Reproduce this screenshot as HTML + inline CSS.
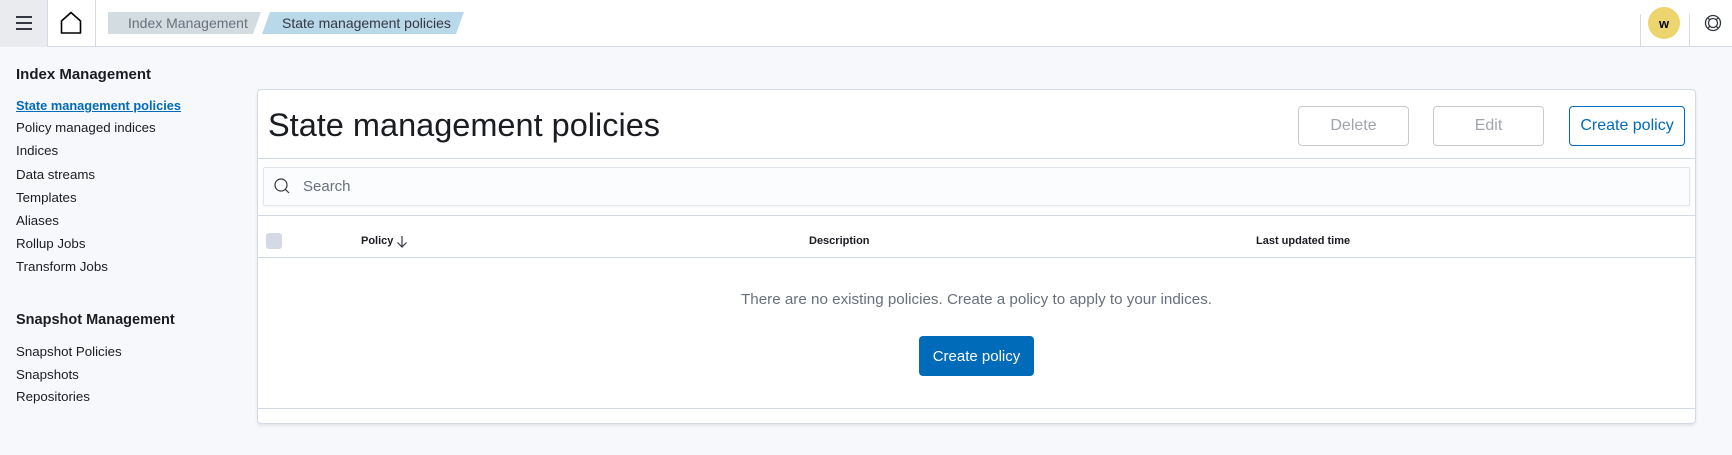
<!DOCTYPE html>
<html><head><meta charset="utf-8"><style>
*{box-sizing:border-box;margin:0;padding:0}
body{width:1732px;height:455px;overflow:hidden;background:#F7F8FC;font-family:"Liberation Sans",sans-serif;color:#1a1c21;position:relative}
.abs{position:absolute}
.hdr{left:0;top:0;width:1732px;height:47px;background:#fff;border-bottom:1px solid #D3DAE6}
.nav a{position:absolute;left:16px;font-size:13.3px;color:#1a1c21;white-space:nowrap;line-height:16px}
.btn{position:absolute;height:40px;border:1px solid #C6CACF;border-radius:4px;font-size:16px;color:#A2A6AC;display:flex;align-items:center;justify-content:center;background:#fff}
</style></head><body>
<div class="abs hdr"></div>
<div class="abs" style="left:0;top:0;width:48px;height:47px;background:#E9EBEF;border-right:1px solid #D3DAE6"></div>
<svg class="abs" style="left:0;top:0" width="48" height="47"><g stroke="#343741" stroke-width="2"><line x1="16" y1="17" x2="32" y2="17"/><line x1="16" y1="23" x2="32" y2="23"/><line x1="16" y1="29" x2="32" y2="29"/></g></svg>
<svg class="abs" style="left:48px;top:0" width="48" height="47"><path d="M13.5 33 V21 L23 12.5 L32.5 21 V33 Z" fill="none" stroke="#000" stroke-width="1.6" stroke-linejoin="round"/></svg>
<div class="abs" style="left:95px;top:0;width:1px;height:47px;background:#D3DAE6"></div>
<svg class="abs" style="left:108px;top:12px" width="360" height="22">
<polygon points="0,0 153,0 145,22 0,22" fill="#D3DCE0"/>
<polygon points="162,0 356,0 348,22 154,22" fill="#B9D8EA"/>
<text x="20" y="16" font-family="Liberation Sans" font-size="14" fill="#69707D">Index Management</text>
<text x="174" y="16" font-family="Liberation Sans" font-size="14" fill="#343741">State management policies</text>
</svg>
<div class="abs" style="left:1640px;top:14px;width:1px;height:33px;background:#D3DAE6"></div>
<div class="abs" style="left:1689px;top:14px;width:1px;height:33px;background:#D3DAE6"></div>
<div class="abs" style="left:1648px;top:7px;width:32px;height:32px;border-radius:50%;background:#ECD56F;font-size:13px;font-weight:bold;display:flex;align-items:center;justify-content:center;color:#000">w</div>
<svg class="abs" style="left:1703px;top:13px" width="20" height="20"><g fill="none" stroke="#343741" stroke-width="1.3"><circle cx="10" cy="10" r="7.5"/><circle cx="10" cy="10" r="4.5"/><line x1="4.7" y1="4.7" x2="6.8" y2="6.8"/><line x1="15.3" y1="4.7" x2="13.2" y2="6.8"/><line x1="4.7" y1="15.3" x2="6.8" y2="13.2"/><line x1="15.3" y1="15.3" x2="13.2" y2="13.2"/></g></svg>

<div class="nav">
<div class="abs" style="left:16px;top:66px;font-size:15px;font-weight:bold;white-space:nowrap">Index Management</div>
<a style="top:98px;color:#006BB8;font-weight:bold;text-decoration:underline;font-size:12.8px">State management policies</a>
<a style="top:120px">Policy managed indices</a>
<a style="top:143px">Indices</a>
<a style="top:167px">Data streams</a>
<a style="top:190px">Templates</a>
<a style="top:213px">Aliases</a>
<a style="top:236px">Rollup Jobs</a>
<a style="top:259px">Transform Jobs</a>
<div class="abs" style="left:16px;top:312px;font-size:14.5px;font-weight:bold;white-space:nowrap">Snapshot Management</div>
<a style="top:344px">Snapshot Policies</a>
<a style="top:367px">Snapshots</a>
<a style="top:389px">Repositories</a>
</div>

<div class="abs" style="left:257px;top:89px;width:1439px;height:335px;background:#fff;border:1px solid #D3DAE6;border-radius:4px;box-shadow:0 2px 3px rgba(0,0,0,.08)"></div>
<div class="abs" style="left:268px;top:107px;font-size:32.5px;font-weight:300;color:#1a1c21;white-space:nowrap">State management policies</div>
<div class="btn" style="left:1298px;top:106px;width:111px">Delete</div>
<div class="btn" style="left:1433px;top:106px;width:111px">Edit</div>
<div class="btn" style="left:1569px;top:106px;width:116px;border-color:#006BB8;color:#006BB8">Create policy</div>
<div class="abs" style="left:258px;top:158px;width:1437px;height:1px;background:#D3DAE6"></div>
<div class="abs" style="left:263px;top:167px;width:1427px;height:39px;background:#FBFCFD;border:1px solid #E0E5EE;border-radius:2px;box-shadow:0 1px 2px rgba(0,0,0,.05)"></div>
<svg class="abs" style="left:273px;top:177px" width="20" height="20"><circle cx="8" cy="8" r="6" fill="none" stroke="#343741" stroke-width="1.2"/><line x1="12.3" y1="12.3" x2="16" y2="16" stroke="#343741" stroke-width="1.2"/></svg>
<div class="abs" style="left:303px;top:178px;font-size:15px;color:#69707D">Search</div>
<div class="abs" style="left:258px;top:215px;width:1437px;height:1px;background:#D3DAE6"></div>
<div class="abs" style="left:266px;top:233px;width:16px;height:16px;border-radius:3px;background:#D3DAE6"></div>
<div class="abs" style="left:361px;top:235px;font-size:11px;font-weight:bold">Policy</div>
<svg class="abs" style="left:396px;top:235px" width="12" height="13"><path d="M6 1V12M1.5 7.5L6 12L10.5 7.5" fill="none" stroke="#343741" stroke-width="1.2"/></svg>
<div class="abs" style="left:809px;top:235px;font-size:11px;font-weight:bold">Description</div>
<div class="abs" style="left:1256px;top:235px;font-size:11px;font-weight:bold">Last updated time</div>
<div class="abs" style="left:258px;top:257px;width:1437px;height:1px;background:#D3DAE6"></div>
<div class="abs" style="left:258px;top:291px;width:1437px;text-align:center;font-size:15.2px;color:#69707D">There are no existing policies. Create a policy to apply to your indices.</div>
<div class="abs" style="left:919px;top:336px;width:115px;height:40px;border-radius:4px;background:#006BB8;color:#fff;font-size:15px;display:flex;align-items:center;justify-content:center">Create policy</div>
<div class="abs" style="left:258px;top:408px;width:1437px;height:1px;background:#D3DAE6"></div>
</body></html>
